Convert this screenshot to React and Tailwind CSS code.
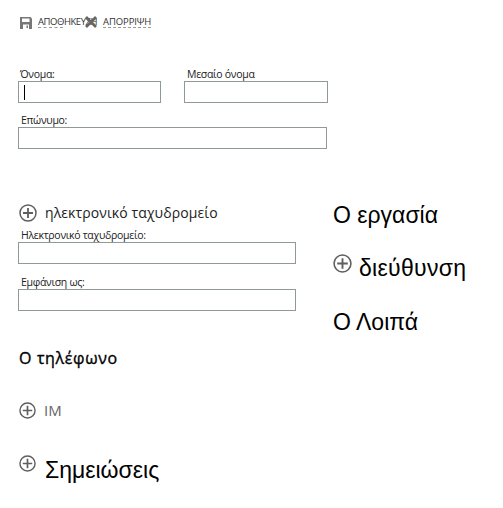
const F = { fontFamily: '"Open Sans", "Noto Sans", sans-serif' };

function Plus({ className }) {
  return (
    <svg viewBox="0 0 18 18" className={className} fill="none" stroke="#5f5f5f">
      <circle cx="9" cy="9" r="8" strokeWidth="1.500" />
      <path d="M9 4v10M4 9h10" strokeWidth="1.800" />
    </svg>
  );
}

function Field({ label, className, labelClass, children }) {
  return (
    <div className={className}>
      <div className={"text-[10.5px] leading-[14px] text-[#222] tracking-[-0.3px] " + (labelClass || "")}>{label}</div>
      <div className="relative h-[22px] border border-[#8f9a94] bg-white">{children}</div>
    </div>
  );
}

export default function App() {
  return (
    <div className="h-[508px] w-[503px] overflow-hidden bg-white text-black" style={F}>
      <div className="flex h-[31px] items-start pl-[20px] pt-[16px]">
        <svg viewBox="0 0 12 12" className="mt-px h-[12px] w-[12px]">
          <path d="M0 0h10.500L12 1.500V12H0z" fill="#777" />
          <path d="M2 1.500h7.500v3.500H2z" fill="#fff" />
          <path d="M3 7.500h6V12H3z" fill="#fff" />
          <path d="M6.500 8.500h1.500v2.500h-1.500z" fill="#777" />
        </svg>
        <div className="ml-[6px] w-[47px]">
          <div className="whitespace-nowrap text-[9.5px] leading-[11px] text-[#333] tracking-[-0.45px]">ΑΠΟΘΗΚΕΥΣΗ</div>
          <div className="w-[25px] border-t border-dashed border-[#999]" />
        </div>
        <svg viewBox="0 0 12 12" className="h-[12px] w-[12px]" stroke="#666" strokeWidth="2.800">
          <path d="M1 1l10 10M11 1L1 11" />
        </svg>
        <div className="ml-[6px]">
          <div className="whitespace-nowrap text-[9.5px] leading-[11px] text-[#333] tracking-[-0.1px]">ΑΠΟΡΡΙΨΗ</div>
          <div className="w-[48px] border-t border-dashed border-[#999]" />
        </div>
      </div>

      <div className="flex">
        <div className="w-[333px] shrink-0">
          <div className="ml-[18px] mt-[36px] flex w-[310px] gap-[23px]">
            <Field label="Όνομα:" labelClass="pl-[2px]" className="w-[143px]">
              <div className="absolute left-[5px] top-[3px] h-[15px] w-px bg-black" />
            </Field>
            <Field label="Μεσαίο όνομα" labelClass="pl-[3px]" className="w-[144px]" />
          </div>
          <Field label="Επώνυμο:" labelClass="pl-[3px]" className="ml-[18px] mt-[10px] w-[309px]" />

          <div className="ml-[19px] mt-[54px] flex h-[20px] items-center gap-[8px]">
            <Plus className="h-[18px] w-[18px]" />
            <span className="text-[14px] leading-[20px] tracking-[0.1px] text-[#222]">ηλεκτρονικό ταχυδρομείο</span>
          </div>
          <Field label="Ηλεκτρονικό ταχυδρομείο:" labelClass="pl-[3px]" className="ml-[18px] mt-[5px] w-[278px]" />
          <Field label="Εμφάνιση ως:" labelClass="pl-[3px]" className="ml-[18px] mt-[11px] w-[278px]" />

          <div className="ml-[19px] mt-[37px] text-[16px] font-medium leading-[20px] tracking-[0.65px] [-webkit-text-stroke:0.35px_black]">Ο τηλέφωνο</div>
          <div className="ml-[19px] mt-[33px] flex h-[18px] items-center gap-[8px]">
            <Plus className="h-[17px] w-[17px]" />
            <span className="text-[15px] leading-[18px] text-[#666]">IM</span>
          </div>
          <div className="ml-[19px] mt-[36px] flex items-start gap-[9px]">
            <Plus className="h-[17px] w-[17px]" />
            <span className="mt-[2px] font-['Liberation_Sans'] text-[23px] leading-[26px]">Σημειώσεις</span>
          </div>
        </div>

        <div className="pt-[171px] font-['Liberation_Sans'] text-[23px] leading-[26px]">
          <div>Ο εργασία</div>
          <div className="mt-[26px] flex items-start gap-[7px]">
            <Plus className="h-[19px] w-[19px]" />
            <span className="mt-[1px] tracking-[0.3px]">διεύθυνση</span>
          </div>
          <div className="mt-[28px]">Ο Λοιπά</div>
        </div>
      </div>
    </div>
  );
}
